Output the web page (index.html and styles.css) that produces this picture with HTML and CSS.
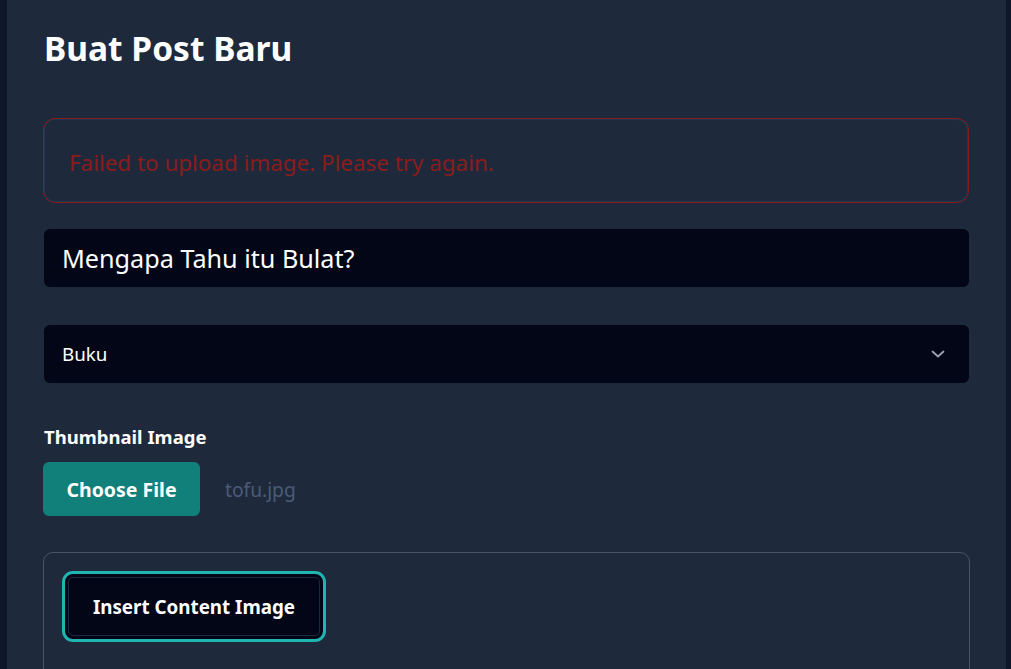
FILE: index.html
```html
<!DOCTYPE html>
<html lang="id">
<head>
<meta charset="utf-8">
<title>Buat Post Baru</title>
<link rel="stylesheet" href="styles.css">
</head>
<body>
<div class="page">
  <main class="panel">
    <h1 class="title">Buat Post Baru</h1>
    <div class="alert">Failed to upload image. Please try again.</div>
    <div class="field field-title">Mengapa Tahu itu Bulat?</div>
    <div class="field field-select">
      <span>Buku</span>
      <svg class="chev" width="14" height="14" viewBox="0 0 14 14"><path d="M1.5 4.5 L7 9.5 L12.5 4.5" fill="none" stroke="#9ca3af" stroke-width="1.8" stroke-linecap="round" stroke-linejoin="round"/></svg>
    </div>
    <label class="label">Thumbnail Image</label>
    <div class="file-row">
      <span class="file-btn">Choose File</span>
      <span class="file-name">tofu.jpg</span>
    </div>
    <section class="content-box">
      <span class="insert-btn">Insert Content Image</span>
    </section>
  </main>
</div>
</body>
</html>
```

FILE: styles.css
```css
* { box-sizing: border-box; }
html, body { margin: 0; padding: 0; }
body {
  background: #0f172a;
  font-family: "Noto Sans", "Open Sans", sans-serif;
  color: #fff;
  height: 669px;
  overflow: hidden;
}
.page {
  padding: 0 5px 0 7px;
}
.panel {
  background: #1e293b;
  width: 999px;
  min-height: 669px;
  padding: 24px 37px 0 36px;
}
.title {
  margin: 0 0 0 1px;
  font-size: 33.5px;
  font-weight: 700;
  line-height: 48px;
  color: #fff;
}
.alert {
  margin-top: 46px;
  height: 85px;
  border: 1px solid #8b1a1a;
  border-radius: 12px;
  box-shadow: inset 0 0 0 1px rgba(20, 90, 110, 0.35);
  color: #8b1c1c;
  font-size: 22.4px;
  display: flex;
  align-items: center;
  padding: 3px 25px 0;
}
.field {
  margin-left: 1px;
  background: #020617;
  border-radius: 6px;
  height: 58px;
  display: flex;
  align-items: center;
  padding: 0 18px;
  color: #fff;
}
.field-title {
  margin-top: 26px;
  font-size: 25.2px;
}
.field-select {
  margin-top: 38px;
  font-size: 18.8px;
  justify-content: space-between;
  padding-right: 24px;
}
.chev { display: block; }
.label {
  display: block;
  margin: 42px 0 0 1px;
  font-size: 18.5px;
  font-weight: 700;
  line-height: 24px;
}
.file-row {
  margin-top: 13px;
  display: flex;
  align-items: center;
  gap: 25px;
}
.file-btn {
  background: #11807a;
  color: #fff;
  border-radius: 6px;
  height: 54px;
  width: 157px;
  display: flex;
  align-items: center;
  justify-content: center;
  font-size: 19.5px;
  font-weight: 700;
}
.file-name {
  color: #4b5b75;
  font-size: 19.2px;
}
.content-box {
  margin: 36px -1px 0 0;
  border: 1px solid #475569;
  border-radius: 10px;
  height: 200px;
  padding: 18px 18px;
}
.insert-btn {
  display: inline-flex;
  align-items: center;
  justify-content: center;
  width: 264px;
  height: 71px;
  background: #020617;
  border: 3px solid #1fb5b0;
  border-radius: 11px;
  box-shadow: inset 0 0 0 3px #020617, inset 0 0 0 4px #1e293b;
  color: #fff;
  font-size: 18.8px;
  font-weight: 700;
}
```
